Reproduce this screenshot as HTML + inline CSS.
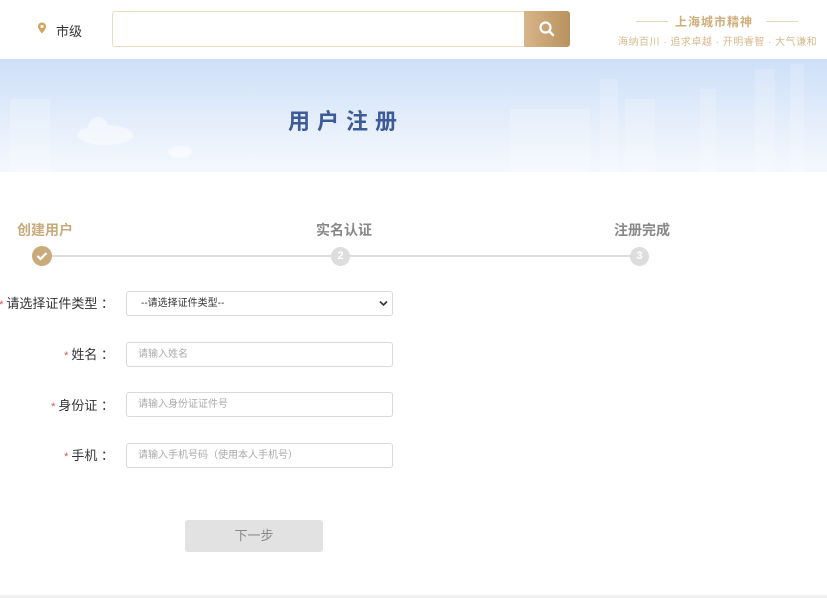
<!DOCTYPE html>
<html><head><meta charset="utf-8"><style>
*{margin:0;padding:0;box-sizing:border-box}
body{width:827px;height:598px;background:#fff;font-family:"Liberation Sans","Noto Sans CJK SC",sans-serif;position:relative;overflow:hidden}
.a{position:absolute}
.inp{position:absolute;left:126px;width:267px;height:25px;border:1px solid #d9d9d9;border-radius:3px;font-size:10px;color:#aaa;padding-left:11px;line-height:23px}
.lab{position:absolute;right:713px;font-size:13px;color:#333;line-height:16px;white-space:nowrap}
.lab b{color:#d9534f;font-weight:normal;font-size:11px;margin-right:3px}
</style></head><body>
<svg class="a" style="left:37px;top:22px" width="10" height="12" viewBox="0 0 10 12"><path d="M5 11.5C2 8 1 6 1 4.5a4 4 0 0 1 8 0C9 6 8 8 5 11.5z" fill="#d3a35e"/><circle cx="5" cy="4.5" r="1.6" fill="#fff"/></svg>
<div class="a" style="left:56px;top:21px;font-size:13px;color:#333">市级</div>
<div class="a" style="left:112px;top:11px;width:414px;height:36px;border:1px solid #eadcc2;border-right:none;border-radius:3px 0 0 3px"></div>
<div class="a" style="left:524px;top:11px;width:46px;height:36px;background:linear-gradient(90deg,#d8b58a,#b8925e);border-radius:0 3px 3px 0"></div>
<svg class="a" style="left:538px;top:20px" width="18" height="18" viewBox="0 0 18 18"><circle cx="7.5" cy="7.5" r="5" fill="none" stroke="#fff" stroke-width="2.2"/><path d="M11 11l4 4" stroke="#fff" stroke-width="2.4" stroke-linecap="round"/></svg>
<div class="a" style="left:636px;top:21px;width:32px;height:1px;background:#e6d7bd"></div>
<div class="a" style="left:766px;top:21px;width:32px;height:1px;background:#e6d7bd"></div>
<div class="a" style="left:675px;top:13px;font-size:12px;color:#cfae7a;font-weight:bold;letter-spacing:1px">上海城市精神</div>
<div class="a" style="left:618px;top:33px;font-size:10px;color:#d6b98c;white-space:nowrap;letter-spacing:0.5px">海纳百川 · 追求卓越 · 开明睿智 · 大气谦和</div>
<div class="a" style="left:0;top:59px;width:827px;height:113px;background:linear-gradient(180deg,#cddff8 0%,#e6effb 60%,#f5f9fe 100%)"></div>
<svg class="a" style="left:0;top:59px" width="827" height="113"><g fill="#fff" opacity=".18"><rect x="600" y="20" width="18" height="93"/><rect x="700" y="30" width="16" height="83"/><rect x="755" y="10" width="20" height="103"/><rect x="790" y="5" width="14" height="108"/><rect x="625" y="40" width="30" height="73"/><rect x="10" y="40" width="40" height="73"/><rect x="510" y="50" width="80" height="63"/></g><g fill="#fff" opacity=".5"><ellipse cx="105" cy="76" rx="28" ry="10"/><circle cx="98" cy="68" r="10"/><ellipse cx="180" cy="93" rx="12" ry="6"/></g></svg>
<div class="a" style="left:288px;top:104px;font-size:22px;font-weight:bold;color:#3e5b99;letter-spacing:7px">用户注册</div>
<div class="a" style="left:17px;top:220px;font-size:14px;font-weight:bold;color:#c9ab7b">创建用户</div>
<div class="a" style="left:316px;top:220px;font-size:14px;font-weight:bold;color:#888">实名认证</div>
<div class="a" style="left:614px;top:220px;font-size:14px;font-weight:bold;color:#888">注册完成</div>
<div class="a" style="left:42px;top:255px;width:598px;height:2px;background:#ddd"></div>
<svg class="a" style="left:32px;top:246px" width="20" height="20"><circle cx="10" cy="10" r="10" fill="#c9ab7b"/><path d="M5.5 10l3 3 6-6" stroke="#fff" stroke-width="2.2" fill="none"/></svg>
<div class="a" style="left:331px;top:247px;width:19px;height:19px;border-radius:50%;background:#ddd;color:#fff;font-size:11px;font-weight:bold;text-align:center;line-height:19px">2</div>
<div class="a" style="left:630px;top:247px;width:19px;height:19px;border-radius:50%;background:#ddd;color:#fff;font-size:11px;font-weight:bold;text-align:center;line-height:19px">3</div>
<div class="lab" style="top:296px"><b>*</b>请选择证件类型 ：</div>
<div class="inp" style="top:291px;color:#333;padding-left:14px">--请选择证件类型--<svg style="position:absolute;right:4px;top:8px" width="9" height="7"><path d="M1 1.5l3.5 3.5 3.5-3.5" stroke="#333" stroke-width="1.6" fill="none"/></svg></div>
<div class="lab" style="top:347px"><b>*</b>姓名 ：</div>
<div class="inp" style="top:342px">请输入姓名</div>
<div class="lab" style="top:398px"><b>*</b>身份证 ：</div>
<div class="inp" style="top:392px">请输入身份证证件号</div>
<div class="lab" style="top:448px"><b>*</b>手机 ：</div>
<div class="inp" style="top:443px">请输入手机号码（使用本人手机号）</div>
<div class="a" style="left:185px;top:520px;width:138px;height:32px;background:#e2e2e2;border-radius:3px;font-size:13px;color:#888;text-align:center;line-height:32px">下一步</div>
<div class="a" style="left:0;top:595px;width:827px;height:3px;background:#f0f0f0"></div>
</body></html>
